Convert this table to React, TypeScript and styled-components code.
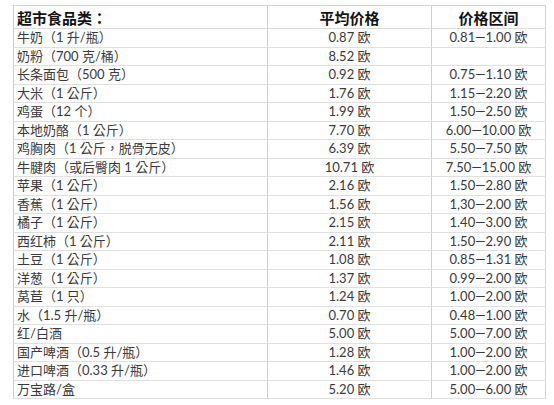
import React from "react";
import styled, { createGlobalStyle } from "styled-components";

const GlobalStyles = createGlobalStyle`
  * {
    margin: 0;
    padding: 0;
    box-sizing: border-box;
  }
  body {
    background: #ffffff;
    font-family: "Lato", "Noto Sans CJK TC", sans-serif;
  }
`;

const Page = styled.div`
  width: 554px;
  height: 405px;
  padding: 5px 0 0 13px;
  background: #fff;
`;

const Table = styled.table`
  width: 532px;
  border-collapse: collapse;
  table-layout: fixed;
  border: 1px solid #d6d6d6;
`;

const HeadCell = styled.th<{ $left?: boolean }>`
  height: 23px;
  padding: 0 3px;
  font-family: "Noto Sans CJK TC", sans-serif;
  font-size: 15px;
  font-weight: 700;
  color: #141414;
  text-align: ${(p) => (p.$left ? "left" : "center")};
  border-left: 1px solid #cfcfcf;
  border-bottom: 1px solid #dcdcdc;
  line-height: 1;
`;

const Cell = styled.td<{ $left?: boolean }>`
  height: 18.5px;
  padding: 0 3px;
  font-size: 13px;
  color: #3a3a3a;
  white-space: nowrap;
  text-align: ${(p) => (p.$left ? "left" : "center")};
  border-left: 1px solid #cfcfcf;
  border-bottom: 1px solid #e0e0e0;
  line-height: 1;
`;

const rows: [string, string, string][] = [
  ["牛奶（1 升/瓶）", "0.87 欧", "0.81—1.00 欧"],
  ["奶粉（700 克/桶）", "8.52 欧", ""],
  ["长条面包（500 克）", "0.92 欧", "0.75—1.10 欧"],
  ["大米（1 公斤）", "1.76 欧", "1.15—2.20 欧"],
  ["鸡蛋（12 个）", "1.99 欧", "1.50—2.50 欧"],
  ["本地奶酪（1 公斤）", "7.70 欧", "6.00—10.00 欧"],
  ["鸡胸肉（1 公斤，脱骨无皮）", "6.39 欧", "5.50—7.50 欧"],
  ["牛腱肉（或后臀肉 1 公斤）", "10.71 欧", "7.50—15.00 欧"],
  ["苹果（1 公斤）", "2.16 欧", "1.50—2.80 欧"],
  ["香蕉（1 公斤）", "1.56 欧", "1,30—2.00 欧"],
  ["橘子（1 公斤）", "2.15 欧", "1.40—3.00 欧"],
  ["西红柿（1 公斤）", "2.11 欧", "1.50—2.90 欧"],
  ["土豆（1 公斤）", "1.08 欧", "0.85—1.31 欧"],
  ["洋葱（1 公斤）", "1.37 欧", "0.99—2.00 欧"],
  ["莴苣（1 只）", "1.24 欧", "1.00—2.00 欧"],
  ["水（1.5 升/瓶）", "0.70 欧", "0.48—1.00 欧"],
  ["红/白酒", "5.00 欧", "5.00—7.00 欧"],
  ["国产啤酒（0.5 升/瓶）", "1.28 欧", "1.00—2.00 欧"],
  ["进口啤酒（0.33 升/瓶）", "1.46 欧", "1.00—2.00 欧"],
  ["万宝路/盒", "5.20 欧", "5.00—6.00 欧"],
];

export default function App() {
  return (
    <>
      <GlobalStyles />
      <Page>
        <Table>
          <colgroup>
            <col style={{ width: 254 }} />
            <col style={{ width: 164 }} />
            <col style={{ width: 114 }} />
          </colgroup>
          <thead>
            <tr>
              <HeadCell $left>超市食品类：</HeadCell>
              <HeadCell>平均价格</HeadCell>
              <HeadCell>价格区间</HeadCell>
            </tr>
          </thead>
          <tbody>
            {rows.map(([name, avg, range]) => (
              <tr key={name}>
                <Cell $left>{name}</Cell>
                <Cell>{avg}</Cell>
                <Cell>{range}</Cell>
              </tr>
            ))}
          </tbody>
        </Table>
      </Page>
    </>
  );
}
